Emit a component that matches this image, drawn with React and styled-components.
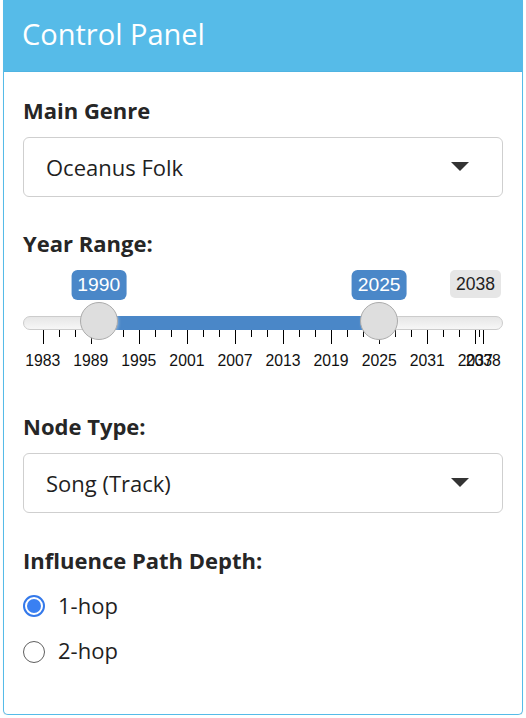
import React from "react";
import styled, { createGlobalStyle } from "styled-components";

const GlobalStyle = createGlobalStyle`
  html, body { margin: 0; padding: 0; background: #ffffff; }
  body { font-family: "Open Sans", "Noto Sans", sans-serif; color: #333; }
  * { box-sizing: border-box; }
`;

const Panel = styled.section`
  margin-left: 3px;
  width: 520px;
  border: 1px solid #56bbe8;
  border-top: none;
  border-radius: 0 0 5px 5px;
  background: #fff;
  box-shadow: 0 1px 1px rgba(0, 0, 0, 0.1);
`;

const Header = styled.header`
  height: 72px;
  padding: 14px 18px 0;
  background: #56bbe8;
  border-bottom: 1px solid #4fb4e2;
  color: #fff;
  font-size: 29px;
  line-height: 40px;
  font-weight: 400;
`;

const Body = styled.div`
  display: flex;
  flex-direction: column;
  padding: 22.5px 19px 49px;
`;

const Group = styled.div`
  display: flex;
  flex-direction: column;
  gap: ${(p) => p.$gap ?? 12.5}px;
  margin-top: ${(p) => p.$mt ?? 0}px;
`;

const Label = styled.div`
  font-size: 22px;
  line-height: 30px;
  font-weight: 700;
  color: #262626;
`;

const Select = styled.div`
  height: 60px;
  display: flex;
  align-items: center;
  justify-content: space-between;
  padding: 0 33px 0 22px;
  border: 1px solid #cfcfcf;
  border-radius: 6px;
  background: #fff;
  font-size: 22px;
  line-height: 30px;
  color: #1f1f1f;
`;

const Caret = styled.span`
  width: 0;
  height: 0;
  border-left: 9px solid transparent;
  border-right: 9px solid transparent;
  border-top: 9px solid #333;
  margin-top: -2px;
`;

/* ---------- range slider ---------- */
const SliderWrap = styled.div`
  position: relative;
  height: 100px;
  font-family: "Liberation Sans", Arial, sans-serif;
`;

const Track = styled.div`
  position: absolute;
  left: 0;
  right: 0;
  top: 46px;
  height: 14px;
  border: 1px solid #cccccc;
  border-radius: 14px;
  background: linear-gradient(to bottom, #dedede -50%, #ffffff 150%);
`;

const Bar = styled.div`
  position: absolute;
  top: 46px;
  height: 14px;
  background: #4a87c8;
`;

const Handle = styled.div`
  position: absolute;
  top: 32px;
  width: 38px;
  height: 38px;
  margin-left: -19px;
  border: 1px solid #ababab;
  border-radius: 50%;
  background: #dedede;
  box-shadow: 1px 1px 3px rgba(255, 255, 255, 0.3);
`;

const ValueTag = styled.div`
  position: absolute;
  top: 0;
  height: 30px;
  padding: 0 6px;
  transform: translateX(-50%);
  border-radius: 6px;
  background: #4a87c8;
  color: #fff;
  font-size: 19.25px;
  line-height: 30px;
  white-space: nowrap;
`;

const MaxTag = styled.div`
  position: absolute;
  top: 0;
  right: 2px;
  height: 28px;
  padding: 0 6px;
  border-radius: 5px;
  background: #e6e6e6;
  color: #222;
  font-size: 17.5px;
  line-height: 28px;
`;

const Tick = styled.span`
  position: absolute;
  top: 60px;
  width: 1px;
  height: ${(p) => (p.$major ? 14 : 7)}px;
  background: #000;
`;

const GridText = styled.span`
  position: absolute;
  top: 81.75px;
  transform: translateX(-50%);
  font-size: 15.75px;
  line-height: 18px;
  color: #111;
  white-space: nowrap;
`;

/* ---------- radios ---------- */
const RadioList = styled.div`
  display: flex;
  flex-direction: column;
  gap: 15.5px;
`;

const RadioRow = styled.label`
  display: flex;
  align-items: center;
  gap: 13px;
  font-size: 22px;
  line-height: 30px;
  color: #1f1f1f;
`;

const RadioDot = styled.span`
  position: relative;
  flex: none;
  width: 22px;
  height: 22px;
  margin-top: 3px;
  border-radius: 50%;
  border: ${(p) => (p.$checked ? "2px solid #3479ea" : "1.5px solid #5f5f5f")};
  background: #fff;
  &::after {
    content: "";
    display: ${(p) => (p.$checked ? "block" : "none")};
    position: absolute;
    left: 50%;
    top: 50%;
    width: 14px;
    height: 14px;
    margin: -7px 0 0 -7px;
    border-radius: 50%;
    background: #3a80f2;
  }
`;

const MIN = 1983;
const MAX = 2038;
const FROM = 1990;
const TO = 2025;
const W = 480;
const HALF = 19.7;
const pos = (v) => HALF + ((v - MIN) / (MAX - MIN)) * (W - 2 * HALF);

function RangeSlider() {
  const majors = [1983, 1989, 1995, 2001, 2007, 2013, 2019, 2025, 2031, 2037, 2038];
  const minors = [];
  for (let i = 0; i < majors.length - 2; i++) {
    minors.push(majors[i] + 2, majors[i] + 4);
  }
  minors.push(2037.5);
  return (
    <SliderWrap>
      <Track />
      <Bar style={{ left: pos(FROM), width: pos(TO) - pos(FROM) }} />
      {majors.map((y) => (
        <Tick key={"M" + y} $major style={{ left: Math.round(pos(y)) }} />
      ))}
      {minors.map((y) => (
        <Tick key={"m" + y} style={{ left: Math.round(pos(y)) }} />
      ))}
      {majors.map((y) => (
        <GridText key={"t" + y} style={{ left: pos(y) }}>
          {y}
        </GridText>
      ))}
      <MaxTag>{MAX}</MaxTag>
      <ValueTag style={{ left: pos(FROM) }}>{FROM}</ValueTag>
      <ValueTag style={{ left: pos(TO) }}>{TO}</ValueTag>
      <Handle style={{ left: pos(FROM) }} />
      <Handle style={{ left: pos(TO) }} />
    </SliderWrap>
  );
}

export default function App() {
  return (
    <>
      <GlobalStyle />
      <Panel>
        <Header>Control Panel</Header>
        <Body>
          <Group>
            <Label>Main Genre</Label>
            <Select>
              <span>Oceanus Folk</span>
              <Caret />
            </Select>
          </Group>
          <Group $mt={30.5}>
            <Label>Year Range:</Label>
            <RangeSlider />
          </Group>
          <Group $mt={40.5}>
            <Label>Node Type:</Label>
            <Select>
              <span>Song (Track)</span>
              <Caret />
            </Select>
          </Group>
          <Group $mt={31.5} $gap={15}>
            <Label>Influence Path Depth:</Label>
            <RadioList>
              <RadioRow>
                <RadioDot $checked />
                1-hop
              </RadioRow>
              <RadioRow>
                <RadioDot />
                2-hop
              </RadioRow>
            </RadioList>
          </Group>
        </Body>
      </Panel>
    </>
  );
}
